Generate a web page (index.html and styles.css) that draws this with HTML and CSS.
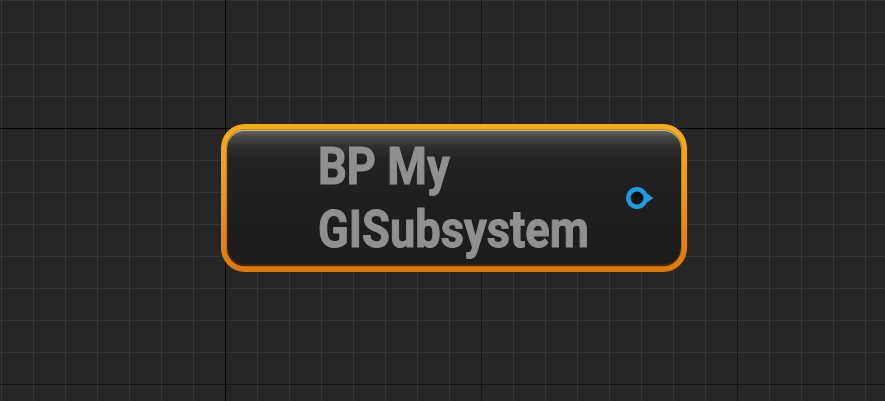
FILE: index.html
```html
<!DOCTYPE html>
<html lang="en">
<head>
<meta charset="utf-8">
<title>Blueprint node</title>
<link rel="stylesheet" href="styles.css">
</head>
<body>
<div class="canvas">
  <div class="node">
    <div class="node-body">
      <div class="node-title">BP My<br>GISubsystem</div>
      <svg class="pin" width="30" height="24" viewBox="0 0 30 24" aria-hidden="true">
        <circle cx="11" cy="12" r="8.7" fill="#111111" stroke="#1c9de3" stroke-width="4.4"/>
        <polygon points="21,7.5 27.5,12 21,16.5" fill="#1c9de3"/>
      </svg>
    </div>
  </div>
</div>
</body>
</html>
```
FILE: styles.css
```css
html, body {
  margin: 0;
  padding: 0;
}
body {
  width: 885px;
  height: 401px;
  overflow: hidden;
  background-color: #262626;
  background-image:
    linear-gradient(to right, transparent 225px, #000 225px, #000 226px, transparent 226px),
    linear-gradient(to bottom, transparent 128px, #000 128px, #000 129px, transparent 129px),
    linear-gradient(to right, #151515 1px, transparent 1px),
    linear-gradient(to bottom, #151515 1px, transparent 1px),
    linear-gradient(to right, #363636 1px, transparent 1px),
    linear-gradient(to bottom, #363636 1px, transparent 1px);
  background-size:
    100% 100%,
    100% 100%,
    256px 100%,
    100% 256px,
    32px 100%,
    100% 32px;
  background-position:
    0 0,
    0 0,
    225px 0,
    0 128px,
    1px 0,
    0 0;
  background-repeat: no-repeat, no-repeat, repeat, repeat, repeat, repeat;
  font-family: Roboto, "Liberation Sans", sans-serif;
}
.canvas {
  position: relative;
  width: 885px;
  height: 401px;
}
.node {
  position: absolute;
  left: 221px;
  top: 124px;
  width: 466px;
  height: 148px;
  box-sizing: border-box;
  padding: 6px;
  border-radius: 24px;
  background: linear-gradient(to bottom, #f3ae1a 0%, #eb9812 50%, #df780a 100%);
}
.node-body {
  height: 100%;
  box-sizing: border-box;
  display: flex;
  align-items: center;
  padding: 0 25px 0 91px;
  border-radius: 18px;
  background: linear-gradient(to bottom, #6a6a6a 0px, #4a4a4a 6px, #303030 16px, #222222 30px, #1e1e1e 60%, #1c1c1c 100%);
  box-shadow: inset 0 1px 0 rgba(235,225,195,0.7), inset 0 -2px 1px rgba(70,40,5,0.9), 0 0 0 1px rgba(120,70,0,0.35);
}
.node-title {
  flex: 1;
  min-width: 0;
  color: #909090;
  font-weight: 700;
  font-size: 52px;
  line-height: 63px;
  margin-top: -1px;
  white-space: nowrap;
  -webkit-text-stroke: 1px #909090;
  transform: scaleX(0.87);
  transform-origin: 0 50%;
}
.pin {
  display: block;
  flex: none;
}
```
